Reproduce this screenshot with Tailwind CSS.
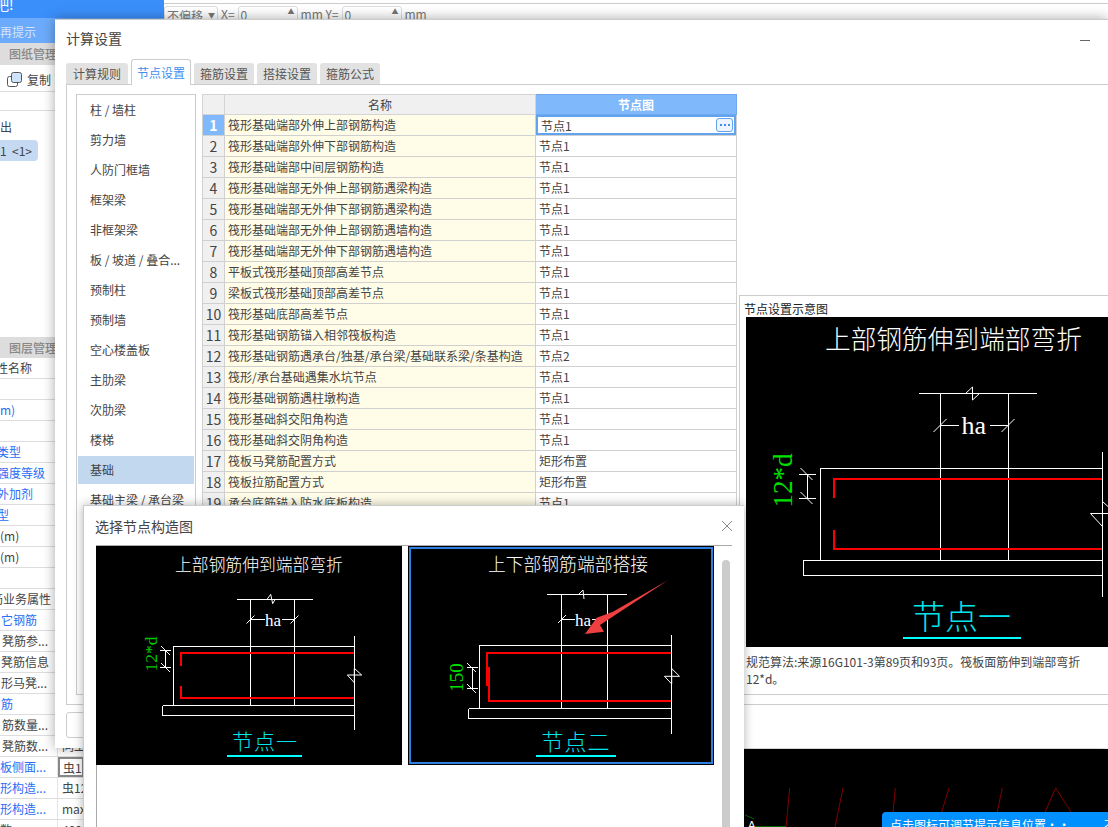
<!DOCTYPE html>
<html lang="zh-CN">
<head>
  <meta charset="UTF-8">
  <title>计算设置</title>
  <script src="https://cdn.jsdelivr.net/npm/@tailwindcss/browser@4"></script>
</head>
<body>
<div class="relative w-[1108px] h-[827px] overflow-hidden bg-white text-xs text-[#444] font-['Noto_Sans_CJK_SC','Liberation_Sans',sans-serif]">

  <!-- Application behind the dialogs -->
  <div class="flex h-full">
    <div class="w-[164px] flex flex-col shrink-0 [&>*]:shrink-0">
      <div class="h-[18px] bg-[#3b8ffb] text-white text-sm leading-[8px] whitespace-nowrap indent-[-5px] overflow-hidden">吧!</div>
      <div class="h-[25px] bg-[#6cabfb] text-[#d5e4f8] text-xs leading-[27px] whitespace-nowrap">再提示</div>
      <div class="h-[22px] bg-[#ddd] text-[#888] font-medium pl-[9px] leading-[22px] whitespace-nowrap">图纸管理</div>
      <div class="h-[27px] flex items-center pl-[7px] pt-[3px] gap-[5px] border-b border-[#ddd]">
        <svg width="15" height="15" viewBox="0 0 15 15" fill="none"><rect x="0.5" y="4.5" width="10" height="10" rx="2" fill="#fff" stroke="#555"/><rect x="4.5" y="0.5" width="10" height="10" rx="2" fill="#cfe3fb" stroke="#555"/></svg>
        <span>复制</span>
      </div>
      <div class="h-[19px] border-b border-[#ddd]"></div>
      <div class="h-[29px] pt-[7px] leading-[18px]">出</div>
      <div class="w-[38px] h-[21px] rounded-r-[4px] bg-[#c5daf2] leading-[21px] whitespace-nowrap">1&nbsp;&nbsp;&lt;1&gt;</div>
      <div class="h-[176px]"></div>
      <div class="h-[21px] bg-[#ddd] text-[#888] font-medium pl-[9px] leading-[21px] whitespace-nowrap">图层管理</div>
      <div id="props" class="w-[84px]"></div>
    </div>
    <div class="flex-1 flex flex-col min-w-0">
      <div class="mt-[3px] h-[17px] border-t border-[#ccc] flex items-start pt-[2px] gap-[3px] text-[#777] whitespace-nowrap">
        <div class="w-[54px] h-[20px] border border-[#ddd] rounded-[3px] flex items-center justify-between px-[2px]"><span>不偏移</span><span class="text-[7px]">▼</span></div>
        <span>X=</span>
        <div class="w-[60px] h-[20px] border border-[#ddd] rounded-[3px] pl-[2px] flex justify-between pr-[2px]"><span>0</span><span class="text-[7px]">▲</span></div>
        <span>mm Y=</span>
        <div class="w-[60px] h-[20px] border border-[#ddd] rounded-[3px] pl-[2px] flex justify-between pr-[2px]"><span>0</span><span class="text-[7px]">▲</span></div>
        <span>mm</span>
      </div>
      <!-- CAD canvas -->
      <div class="mt-auto h-[78px] bg-black relative overflow-hidden">
        <svg class="absolute left-0 top-0" width="944" height="78" viewBox="164 749 944 78" fill="none">
          <path stroke="#800000" d="M789.7 788L786 827M843 788L835 827M895.3 788L893 813M949 788L941.3 813M1002.3 788L997 813M1044.7 813L1055.7 788L1071 812"/>
          <path stroke="#006400" d="M745 815L754 819M754 826.5H786"/>
          <text x="748" y="829" fill="#fff" font-size="11" font-family="Liberation Sans">A</text>
        </svg>
        <div class="absolute left-[718px] top-[63px] w-[240px] h-[30px] bg-[#0090ff] rounded-tl-[4px] text-white pl-[8px] pt-[4px] leading-[18px] whitespace-nowrap flex">
          <span>点击图标可调节提示信息位置··</span><span class="ml-[34px]">不再</span>
        </div>
      </div>
    </div>
  </div>

  <!-- 计算设置 dialog -->
  <div class="absolute left-[55px] top-[19px] w-[1053px] h-[729px] bg-white border-t border-[#ccc] shadow-[0_0_12px_rgba(0,0,0,0.35)] flex flex-col overflow-hidden">
    <div class="h-[39px] shrink-0 flex items-center justify-between pl-[11px] pr-[18px]">
      <span class="text-sm text-[#444] -mt-[4px]">计算设置</span>
      <span class="w-[10px] h-px bg-[#666] mt-[2px]"></span>
    </div>
    <div class="h-[26px] shrink-0 flex items-end pl-[11px] gap-[3px] relative z-10">
      <div class="w-[62px] h-[21px] mb-px bg-[#e2e2e2] rounded-t-[3px] text-center leading-[21px] text-[#555]">计算规则</div>
      <div class="w-[60px] h-[26px] bg-white border border-b-0 border-[#ccc] rounded-t-[3px] text-center leading-[26px] text-[#3f8fef]">节点设置</div>
      <div class="w-[60px] h-[21px] mb-px bg-[#e2e2e2] rounded-t-[3px] text-center leading-[21px] text-[#555]">箍筋设置</div>
      <div class="w-[60px] h-[21px] mb-px bg-[#e2e2e2] rounded-t-[3px] text-center leading-[21px] text-[#555]">搭接设置</div>
      <div class="w-[60px] h-[21px] mb-px bg-[#e2e2e2] rounded-t-[3px] text-center leading-[21px] text-[#555]">箍筋公式</div>
    </div>
    <div class="ml-[11px] -mt-px h-[621px] border border-r-0 border-[#ccc] pl-[9px] pt-[9px] flex items-start shrink-0">
      <!-- Category list -->
      <div class="w-[120px] h-[601px] shrink-0 border border-[#ccc] pl-px pr-px">
        <div class="h-[30px] pl-[12px] leading-[30px]">柱 / 墙柱</div>
        <div class="h-[30px] pl-[12px] leading-[30px]">剪力墙</div>
        <div class="h-[30px] pl-[12px] leading-[30px]">人防门框墙</div>
        <div class="h-[30px] pl-[12px] leading-[30px]">框架梁</div>
        <div class="h-[30px] pl-[12px] leading-[30px]">非框架梁</div>
        <div class="h-[30px] pl-[12px] leading-[30px]">板 / 坡道 / 叠合...</div>
        <div class="h-[30px] pl-[12px] leading-[30px]">预制柱</div>
        <div class="h-[30px] pl-[12px] leading-[30px]">预制墙</div>
        <div class="h-[30px] pl-[12px] leading-[30px]">空心楼盖板</div>
        <div class="h-[30px] pl-[12px] leading-[30px]">主肋梁</div>
        <div class="h-[30px] pl-[12px] leading-[30px]">次肋梁</div>
        <div class="h-[30px] pl-[12px] leading-[30px]">楼梯</div>
        <div class="h-[30px] pl-[12px] leading-[28px] bg-[#c2d8ef] border-y border-white">基础</div>
        <div class="h-[30px] pl-[12px] leading-[30px]">基础主梁 / 承台梁</div>
      </div>
      <!-- Node table -->
      <table class="ml-[6px] w-[534px] table-fixed border-collapse shrink-0 border-t border-[#ccc]">
        <colgroup><col class="w-[22px]"><col class="w-[311px]"><col class="w-[201px]"></colgroup>
        <thead>
          <tr class="h-[20px]">
            <th class="bg-[#f0f0f0] border border-[#d4d4d4]"></th>
            <th class="bg-[#f0f0f0] border border-[#d4d4d4] font-normal">名称</th>
            <th class="bg-[#80b9fb] border border-[#6fa8ee] text-white font-bold">节点图</th>
          </tr>
        </thead>
        <tbody id="rows"></tbody>
      </table>
      <!-- Preview panel -->
      <div class="ml-[2px] mt-[201px] w-[369px] h-[400px] shrink-0 border-t border-l border-b border-[#ccc]">
        <div class="h-[21px] pl-[4px] pt-[4px] leading-[18px] text-[#222]">节点设置示意图</div>
        <svg class="ml-[6px] block bg-black" width="363" height="330" viewBox="745.5 317 363 330" fill="none">
          <g stroke="#fff" shape-rendering="crispEdges">
            <path d="M918 393.5H1036M939.5 393.5V560M1007.5 393.5V560M819.5 560V468.5H1101.5M1101.5 452V597M802.5 560.5H1101.5M802.5 560.5V575.5H1101.5M939.5 425.5H958M989 425.5H1007.5M798 474.5H815M798 498.5H815M806.5 474.5V498.5"/>
          </g>
          <path stroke="#fff" d="M965 393.5L972 387L972 400L979 393.5M933 432L946 419M1001 432L1014 419M800 468L812 480M800 492L812 504M1090 513.5H1108M1090 513.5L1101.5 526M1101.5 501L1108 507"/>
          <path stroke="#f00" stroke-width="2" shape-rendering="crispEdges" d="M1101 478.5H833V497.5M833 530V548.5H1101"/>
          <text x="953" y="349" fill="#fff" font-size="25.7" text-anchor="middle" font-family="Noto Sans CJK SC" font-weight="300">上部钢筋伸到端部弯折</text>
          <text x="961" y="434" fill="#fff" font-size="26" font-family="Liberation Serif">ha</text>
          <text transform="translate(791 480.5) rotate(-90)" fill="#00e000" font-size="27" text-anchor="middle" font-family="Liberation Serif">12*d</text>
          <text x="961" y="629" fill="#00e5ee" font-size="33" text-anchor="middle" font-family="Noto Sans CJK SC" font-weight="300">节点一</text>
          <path stroke="#00ffff" stroke-width="2" shape-rendering="crispEdges" d="M902 637.5H1020"/>
        </svg>
        <p class="ml-[6px] mt-[6px] leading-[17px] whitespace-nowrap">规范算法:来源16G101-3第89页和93页。筏板面筋伸到端部弯折<br>12*d。</p>
      </div>
    </div>
    <div class="ml-[11px] mt-[7px] w-[70px] h-[26px] border border-[#ccc] rounded-[3px] text-center leading-[24px]">恢复</div>
  </div>

  <!-- 选择节点构造图 dialog -->
  <div class="absolute left-[83px] top-[505px] w-[661px] h-[330px] bg-white border-t border-l border-[#ccc] shadow-[0_0_10px_rgba(0,0,0,0.3)]">
    <div class="h-[39px] flex items-center justify-between pl-[11px] pr-[11px]">
      <span class="text-sm text-[#444]">选择节点构造图</span>
      <svg width="12" height="12" viewBox="0 0 12 12" fill="none" stroke="#888"><path d="M1 1L11 11M11 1L1 11"/></svg>
    </div>
    <div class="ml-[12px] w-[636px] h-[290px] border-t border-l border-[#aaa] relative flex gap-[6px]">
      <svg class="block bg-black shrink-0 -ml-px" width="306" height="219" viewBox="96 546 306 219" fill="none">
        <path stroke="#fff" shape-rendering="crispEdges" d="M237 599.5H313M250.5 599.5V705M294.5 599.5V705M173.5 705V646.5H354.5M354.5 636V730M162.5 705.5H354.5M162.5 705.5V715.5H354.5M250.5 619.5H265M282 619.5H294.5M160 650.5H171M160 667.5H171M165.5 650.5V667.5"/>
        <path stroke="#fff" d="M267.3 599L270.7 594.3L272.7 603.7L275.3 599M246.5 623.5L254.5 615.5M290.5 623.5L298.5 615.5M161 646L170 655M161 663L170 672M347.3 675H361.7L354.3 668.3V682.7Z"/>
        <path stroke="#f00" stroke-width="2" shape-rendering="crispEdges" d="M354 652.5H181V666M181 686V697.5H354"/>
        <text x="259" y="571" fill="#fff" font-size="16.8" text-anchor="middle" font-family="Noto Sans CJK SC" font-weight="300">上部钢筋伸到端部弯折</text>
        <text x="265" y="626" fill="#fff" font-size="17" font-family="Liberation Serif">ha</text>
        <text transform="translate(157 654) rotate(-90)" fill="#00c800" font-size="17.5" text-anchor="middle" font-family="Liberation Serif">12*d</text>
        <text x="265" y="749" fill="#00e5ee" font-size="21" letter-spacing="1" text-anchor="middle" font-family="Noto Sans CJK SC" font-weight="300">节点一</text>
        <path stroke="#00ffff" stroke-width="2" shape-rendering="crispEdges" d="M227 755.5H302"/>
      </svg>
      <svg class="block bg-black shrink-0" width="306" height="219" viewBox="408 546 306 219" fill="none">
        <path stroke="#fff" shape-rendering="crispEdges" d="M547 594.5H627M561.5 594.5V708M607.5 594.5V708M479.5 708V645.5H671.5M671.5 635V734M468.5 708.5H671.5M468.5 708.5V718.5H671.5M561.5 619.5H575M592 619.5H607.5M467 667.5H478M467 688.5H478M472.5 667.5V688.5"/>
        <path stroke="#fff" d="M579 594L583 590L584 599M558 623L566 615M467 663L476 672M467 684L476 693M664.5 676.3H679.5L671.7 668.5V684Z"/>
        <path stroke="#f00" stroke-width="2" shape-rendering="crispEdges" d="M671 652.5H486.5V686M488.5 667V701H671"/>
        <text x="568" y="571" fill="#fff" font-size="17.8" text-anchor="middle" font-family="Noto Sans CJK SC" font-weight="300">上下部钢筋端部搭接</text>
        <text x="575" y="626" fill="#fff" font-size="17" font-family="Liberation Serif">ha</text>
        <text transform="translate(463 677.5) rotate(-90)" fill="#00e000" font-size="19" text-anchor="middle" font-family="Liberation Serif">150</text>
        <text x="576" y="750" fill="#00e5ee" font-size="22" letter-spacing="1" text-anchor="middle" font-family="Noto Sans CJK SC" font-weight="300">节点二</text>
        <path stroke="#00ffff" stroke-width="2" shape-rendering="crispEdges" d="M536 755.5H616"/>
        <path fill="#ee4040" d="M585 634L604 631.7L600 625L668.3 580L613 611.7L596.7 617.7Z"/>
        <rect x="409.5" y="547.5" width="303" height="216" stroke="#2f7fe0" stroke-width="3"/>
        <rect x="408.5" y="546.5" width="305" height="218" stroke="#000"/>
      </svg>
      <div class="absolute left-[625px] top-[14px] w-[8px] h-[290px] rounded-t-[4px] bg-[#ccc]"></div>
    </div>
  </div>
</div>

<script>
  // node table rows
  const rows = [
    ['筏形基础端部外伸上部钢筋构造', '节点1'], ['筏形基础端部外伸下部钢筋构造', '节点1'],
    ['筏形基础端部中间层钢筋构造', '节点1'], ['筏形基础端部无外伸上部钢筋遇梁构造', '节点1'],
    ['筏形基础端部无外伸下部钢筋遇梁构造', '节点1'], ['筏形基础端部无外伸上部钢筋遇墙构造', '节点1'],
    ['筏形基础端部无外伸下部钢筋遇墙构造', '节点1'], ['平板式筏形基础顶部高差节点', '节点1'],
    ['梁板式筏形基础顶部高差节点', '节点1'], ['筏形基础底部高差节点', '节点1'],
    ['筏形基础钢筋锚入相邻筏板构造', '节点1'], ['筏形基础钢筋遇承台/独基/承台梁/基础联系梁/条基构造', '节点2'],
    ['筏形/承台基础遇集水坑节点', '节点1'], ['筏形基础钢筋遇柱墩构造', '节点1'],
    ['筏形基础斜交阳角构造', '节点1'], ['筏形基础斜交阴角构造', '节点1'],
    ['筏板马凳筋配置方式', '矩形布置'], ['筏板拉筋配置方式', '矩形布置'],
    ['承台底筋锚入防水底板构造', '节点1'],
  ];
  document.getElementById('rows').innerHTML = rows.map((r, i) => {
    const first = i === 0;
    const numCls = first
      ? 'bg-[#80b9fb] border border-[#d0d0d0] text-white font-bold text-center text-sm p-0'
      : 'bg-[#f0f0f0] border border-[#d0d0d0] text-center text-sm p-0';
    const val = first
      ? '<div class="absolute left-0 top-0 right-0 bottom-0 border-2 border-[#62a3ef] pl-[3px] leading-[17px] flex justify-between"><span>' + r[1] + '</span><span class="w-[17px] h-[14px] mt-[1px] mr-[1px] border border-[#62a3ef] rounded-[3px] bg-[#eef5fe] flex items-center justify-center gap-[2px]"><i class="w-[2px] h-[2px] bg-[#3f8fef]"></i><i class="w-[2px] h-[2px] bg-[#3f8fef]"></i><i class="w-[2px] h-[2px] bg-[#3f8fef]"></i></span></div>'
      : r[1];
    return '<tr class="h-[21px]"><td class="' + numCls + '">' + (i + 1) + '</td>' +
      '<td class="bg-[#fffde8] border border-[#d0d0d0] pl-[3px] p-0 whitespace-nowrap overflow-hidden">' + r[0] + '</td>' +
      '<td class="relative bg-white border border-[#d0d0d0] pl-[3px] p-0 whitespace-nowrap">' + val + '</td></tr>';
  }).join('');

  // property grid on the far left, only its right end shows
  const nameBase = 'w-[58px] border-r border-[#e4e4e4] whitespace-nowrap overflow-hidden ';
  const props = [
    ['属性名称', '', 'indent-[-16px]'], ['', ''], ['m)', '', 'text-[#2a6df4]'], ['', ''],
    ['类型', '', 'text-[#2a6df4] indent-[-3px]'], ['强度等级', '', 'text-[#2a6df4] indent-[-3px]'],
    ['外加剂', '', 'text-[#2a6df4] indent-[-3px]'], ['型', '', 'text-[#2a6df4] indent-[-3px]'],
    ['(m)', ''], ['(m)', ''], ['', ''], ['筋业务属性', '', 'indent-[-9px]'], ['它钢筋', '', 'text-[#2a6df4] pl-px'],
    ['凳筋参...', '', 'pl-[2px]'], ['凳筋信息', '', 'pl-[1px]'], ['形马凳...', '', 'pl-px'], ['筋', '', 'text-[#2a6df4] pl-px'],
    ['筋数量...', '', 'pl-[2px]'], ['凳筋数...', '同上', 'pl-[2px]'], ['板侧面...', '虫12', 'text-[#2a6df4]', 1],
    ['形构造...', '虫12', 'text-[#2a6df4]'], ['形构造...', 'max', 'text-[#2a6df4]'], ['数...', '400'],
  ];
  document.getElementById('props').innerHTML = props.map(p => {
    const valCls = p[3] ? 'w-[26px] pl-[3px] border-2 border-[#888] whitespace-nowrap overflow-hidden leading-[17px]' : 'w-[26px] pl-[4px] whitespace-nowrap overflow-hidden';
    return '<div class="flex h-[21px] leading-[20px] border-b border-[#ddd]"><div class="' + nameBase + (p[2] || '') + '">' + p[0] + '</div><div class="' + valCls + '">' + p[1] + '</div></div>';
  }).join('');
</script>
</body>
</html>
